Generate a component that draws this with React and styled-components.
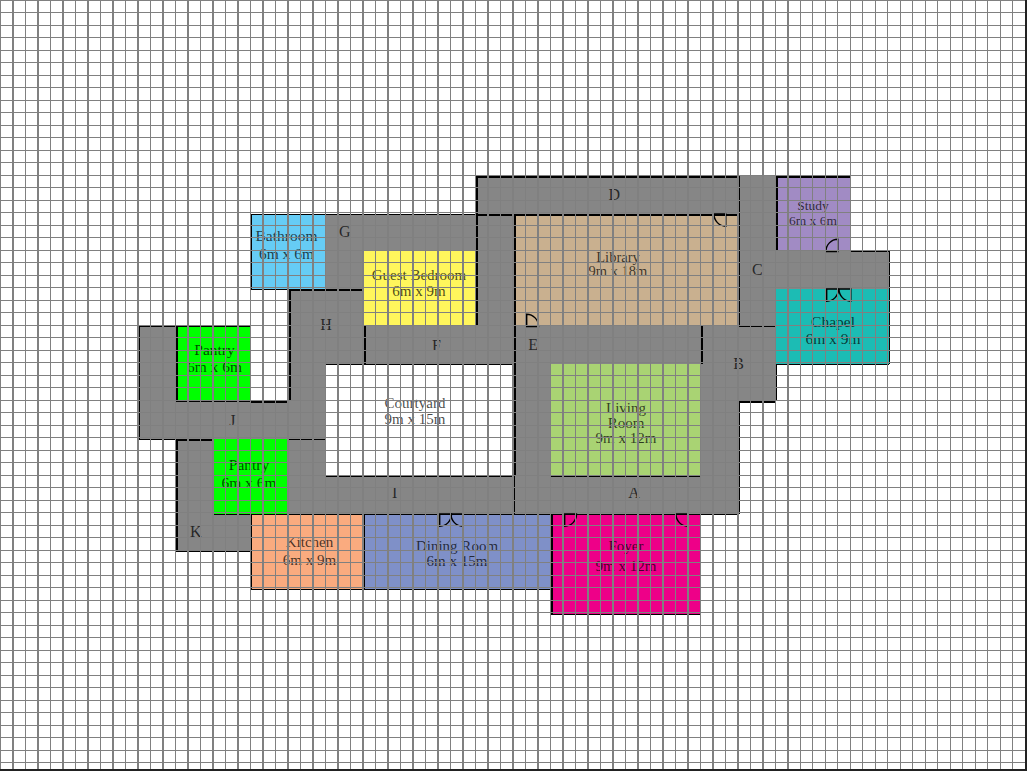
import React from "react";
import styled, { createGlobalStyle, css } from "styled-components";

const Global = createGlobalStyle`
  html, body { margin: 0; padding: 0; background: #fff; overflow: hidden; }
  #root { width: 1027px; height: 771px; }
`;

/* Walls: t/l sit inside a tile's edge, r/b just past it (beyond the grid line).
   Lower case is a 1px wall, upper case a 2px wall. */
const wallStyle = (walls = "") => {
  const borders = [];
  const shadows = [];
  [...walls].forEach((ch) => {
    const width = ch === ch.toUpperCase() ? 2 : 1;
    const key = ch.toLowerCase();
    if (key === "t") borders.push(`border-top: ${width}px solid #000;`);
    if (key === "l") borders.push(`border-left: ${width}px solid #000;`);
    if (key === "r") shadows.push(`${width}px 0 0 #000`);
    if (key === "b") shadows.push(`0 ${width}px 0 #000`);
  });
  return borders.join("") + (shadows.length ? `box-shadow: ${shadows.join(",")};` : "");
};

const Plan = styled.main`
  position: relative;
  width: 1027px;
  height: 771px;
  box-sizing: border-box;
  padding: 1px 0 0 1px;
  overflow: hidden;
  display: grid;
  grid-template-columns: repeat(83, 12.5px);
  grid-template-rows: repeat(62, 12.5px);
  font-family: "Liberation Serif", "Times New Roman", serif;
  color: rgba(0, 0, 0, 0.72);
`;

const Tile = styled.div`
  grid-column: ${(p) => p.$c + 1} / span ${(p) => p.$w};
  grid-row: ${(p) => p.$r + 1} / span ${(p) => p.$h};
  box-sizing: border-box;
  z-index: ${(p) => (p.$walls ? 1 : 0)};
  ${(p) => wallStyle(p.$walls)}
`;

const Hall = styled(Tile)`
  background: #868686;
`;

const RoomBox = styled(Tile)`
  background: ${(p) => p.$fill};
  display: flex;
  flex-direction: column;
  align-items: center;
  font-size: ${(p) => p.$fs}px;
  padding-top: ${(p) => p.$pt}px;
  line-height: ${(p) => p.$lh}px;
  ${(p) => p.$dx > 0 && css`padding-left: ${p.$dx * 2}px;`}
  ${(p) => p.$dx < 0 && css`padding-right: ${-p.$dx * 2}px;`}
  white-space: nowrap;
`;

const Line = styled.span`
  display: block;
`;

const HallLabel = styled(Tile)`
  z-index: 1;
  display: flex;
  align-items: center;
  justify-content: center;
  font-size: 16px;
  ${(p) => p.$dx > 0 && css`padding-left: ${p.$dx * 2}px;`}
  ${(p) => p.$dx < 0 && css`padding-right: ${-p.$dx * 2}px;`}
  ${(p) => p.$dy > 0 && css`padding-top: ${p.$dy * 2}px;`}
  ${(p) => p.$dy < 0 && css`padding-bottom: ${-p.$dy * 2}px;`}
`;

const DoorCell = styled(Tile)`
  z-index: 1;
  display: block;
`;

const DoorSvg = styled.svg`
  display: block;
  width: 100%;
  height: 100%;
  overflow: visible;
  transform: scale(${(p) => (p.$flipX ? -1 : 1)}, ${(p) => (p.$flipY ? -1 : 1)});
  path {
    fill: none;
    stroke: #000;
    stroke-width: 1.4;
  }
`;

const GridOverlay = styled.div`
  position: absolute;
  inset: 0;
  z-index: 2;
  pointer-events: none;
  box-sizing: border-box;
  border-right: 2px solid #222;
  border-bottom: 2px solid #222;
  background-image:
    repeating-linear-gradient(to right, #808080 0 1px, transparent 1px 12.5px),
    repeating-linear-gradient(to bottom, #808080 0 1px, transparent 1px 12.5px);
`;

const Room = ({ lines, y, lh, x, c, r, w, h, fs = 15, ...rest }) => {
  const pt = y - lh / 2 - r * 12.5 - 1;
  const dx = x - 1 - (c + w / 2) * 12.5;
  return (
    <RoomBox $c={c} $r={r} $w={w} $h={h} $pt={pt} $lh={lh} $dx={dx} $fs={fs} {...rest}>
      {lines.map((t) => <Line key={t}>{t}</Line>)}
    </RoomBox>
  );
};

const Door = ({ c, r, flipX, flipY }) => (
  <DoorCell $c={c} $r={r} $w={1} $h={1}>
    <DoorSvg viewBox="0 0 12.5 12.5" $flipX={flipX} $flipY={flipY}>
      <path d="M0.7 0V12.2A11.8 12 0 0 0 12.5 0Z" />
    </DoorSvg>
  </DoorCell>
);

const halls = [
  [38, 14, 21, 3, "TL"],
  [59, 14, 3, 12, "lb"],
  [62, 20, 6, 3, ""],
  [68, 20, 3, 3, "tr"],
  [56, 26, 3, 3, "L"],
  [59, 26, 3, 3, ""],
  [56, 29, 6, 3, "rB"],
  [56, 32, 3, 6, "r"],
  [41, 38, 18, 3, "lrb"],
  [26, 38, 15, 3, "tb"],
  [41, 26, 15, 3, "L"],
  [41, 29, 3, 9, "L"],
  [29, 26, 12, 3, "Lb"],
  [38, 17, 3, 9, "TL"],
  [26, 17, 12, 3, "t"],
  [26, 20, 3, 3, ""],
  [23, 23, 6, 6, "TLb"],
  [23, 29, 3, 3, "L"],
  [23, 32, 3, 3, ""],
  [11, 26, 3, 6, "tl"],
  [11, 32, 3, 3, "lb"],
  [14, 32, 6, 3, ""],
  [20, 32, 3, 3, "T"],
  [23, 35, 3, 6, "t"],
  [14, 35, 3, 9, "TLb"],
  [17, 41, 3, 3, "b"],
  [17, 35, 6, 6, ""],
];

const rooms = [
  { lines: ["Study", "6m x 6m"], fill: "#a18bc4", c: 62, r: 14, w: 6, h: 6, x: 812, y: 203, lh: 15, fs: 13.5, walls: "TL" },
  { lines: ["Chapel", "6m x 9m"], fill: "#1cbcb4", c: 62, r: 23, w: 9, h: 6, x: 833, y: 321, lh: 17, fs: 15.5, walls: "rb" },
  { lines: ["Library", "9m x 18m"], fill: "#c9b08f", c: 41, r: 17, w: 18, h: 9, x: 617, y: 255, lh: 14, fs: 14.5, walls: "TLr" },
  { lines: ["Living", "Room", "9m x 12m"], fill: "#a9d373", c: 44, r: 29, w: 12, h: 9, x: 626, y: 408, lh: 15, walls: "b" },
  { lines: ["Foyer", "9m x 12m"], fill: "#ee0088", c: 44, r: 41, w: 12, h: 8, x: 625, y: 545, lh: 20, walls: "tLb" },
  { lines: ["Dining Room", "6m x 15m"], fill: "#7f90c8", c: 29, r: 41, w: 15, h: 6, x: 457, y: 545, lh: 15, walls: "tb" },
  { lines: ["Kitchen", "6m x 9m"], fill: "#faab7f", c: 20, r: 41, w: 9, h: 6, x: 309, y: 541, lh: 18, walls: "tlbr" },
  { lines: ["Pantry", "6m x 6m"], fill: "#00ff00", c: 17, r: 35, w: 6, h: 6, x: 249, y: 465, lh: 18, fs: 15.5, walls: "b" },
  { lines: ["Pantry", "6m x 6m"], fill: "#00ff00", c: 14, r: 26, w: 6, h: 6, x: 213.5, y: 348, lh: 17, fs: 15.5, walls: "tLb" },
  { lines: ["Bathroom", "6m x 6m"], fill: "#66ccf5", c: 20, r: 17, w: 6, h: 6, x: 286, y: 235, lh: 18, fs: 15.5, walls: "tlb" },
  { lines: ["Guest Bedroom", "6m x 9m"], fill: "#fff65c", c: 29, r: 20, w: 9, h: 6, x: 419, y: 275, lh: 16, walls: "" },
  { lines: ["Courtyard", "9m x 15m"], fill: "#ffffff", c: 26, r: 29, w: 15, h: 9, x: 415, y: 403, lh: 16, walls: "" },
];

const labels = [
  ["D", 38, 14, 21, 3, 7, 0],
  ["C", 59, 20, 3, 3, 0, 0],
  ["B", 56, 26, 6, 6, 0, 0],
  ["A", 44, 38, 12, 3, 8, -2],
  ["I", 26, 38, 11, 3, 0, -2],
  ["J", 14, 32, 9, 3, 0, 1],
  ["K", 14, 41, 3, 3, 1, 0],
  ["H", 23, 25, 6, 2, 0, -1],
  ["G", 26, 17, 3, 3, 0, 0],
  ["F", 29, 26, 12, 3, -2, 1],
  ["E", 41, 26, 3, 3, 1, 0],
];

const doors = [
  { c: 57, r: 17, flipX: true },
  { c: 42, r: 25, flipY: true },
  { c: 66, r: 19, flipX: true, flipY: true },
  { c: 66, r: 23 },
  { c: 67, r: 23, flipX: true },
  { c: 35, r: 41 },
  { c: 36, r: 41, flipX: true },
  { c: 45, r: 41 },
  { c: 54, r: 41, flipX: true },
];

export default function App() {
  return (
    <>
      <Global />
      <Plan>
        {halls.map(([c, r, w, h, walls]) => (
          <Hall key={`${c}-${r}`} $c={c} $r={r} $w={w} $h={h} $walls={walls} />
        ))}
        {rooms.map(({ fill, walls, ...room }) => (
          <Room key={`${room.c}-${room.r}`} {...room} $fill={fill} $walls={walls} />
        ))}
        {labels.map(([text, c, r, w, h, dx, dy]) => (
          <HallLabel key={text} $c={c} $r={r} $w={w} $h={h} $dx={dx} $dy={dy}>{text}</HallLabel>
        ))}
        {doors.map((d) => <Door key={`${d.c}-${d.r}`} {...d} />)}
        <GridOverlay />
      </Plan>
    </>
  );
}
